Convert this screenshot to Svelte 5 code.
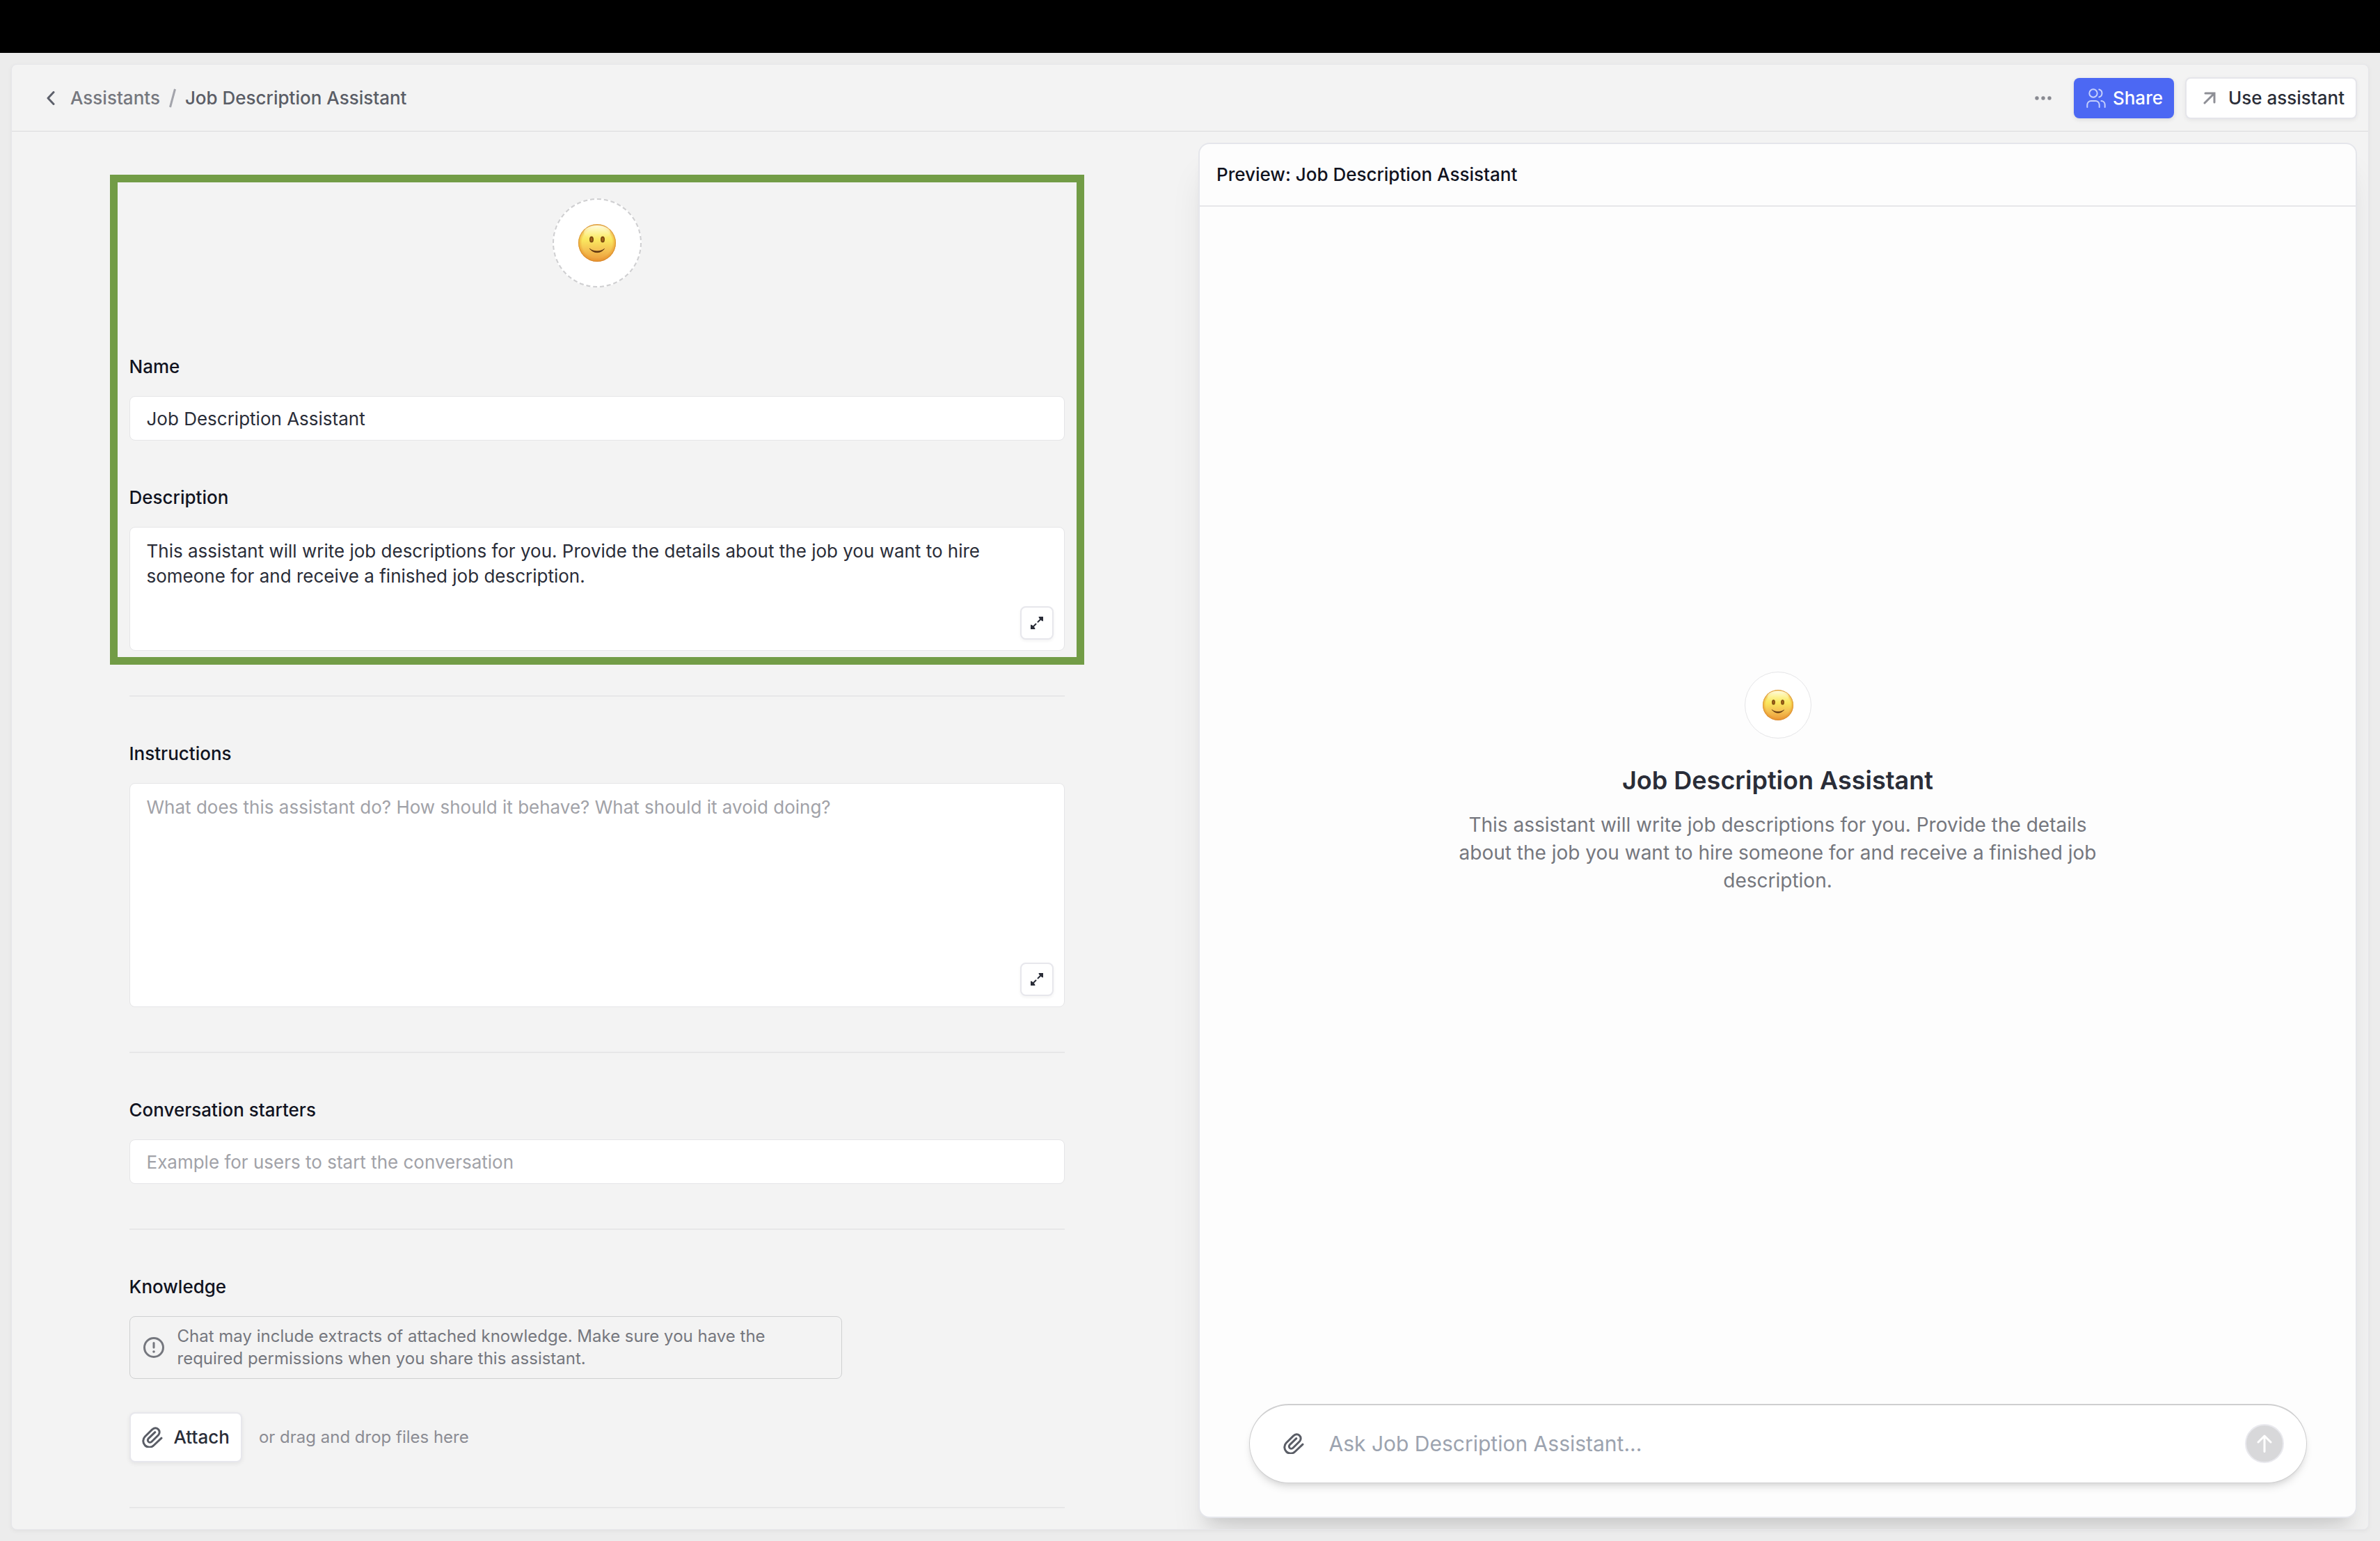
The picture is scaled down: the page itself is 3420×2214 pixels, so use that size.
<script>
  let name = $state('Job Description Assistant');
  let description = $state(
    'This assistant will write job descriptions for you. Provide the details about the job you want to hire someone for and receive a finished job description.'
  );
  let instructions = $state('');
  let starter = $state('');
  let message = $state('');
</script>

{#snippet smiley(id)}
  <svg class="smiley" viewBox="0 0 54 54" aria-hidden="true">
    <defs>
      <linearGradient id="{id}-base" x1="0" y1="0" x2="0" y2="1">
        <stop offset="0" stop-color="#fdf3a8" />
        <stop offset="0.2" stop-color="#fcf08a" />
        <stop offset="0.42" stop-color="#fae75f" />
        <stop offset="0.68" stop-color="#f5c453" />
        <stop offset="1" stop-color="#eb9838" />
      </linearGradient>
      <radialGradient id="{id}-rim" cx="0.5" cy="0.5" r="0.5">
        <stop offset="0.8" stop-color="#e08a20" stop-opacity="0" />
        <stop offset="0.93" stop-color="#e8932a" stop-opacity="0.45" />
        <stop offset="1" stop-color="#c9741c" stop-opacity="0.85" />
      </radialGradient>
      <linearGradient id="{id}-gloss" x1="0" y1="0" x2="0" y2="1">
        <stop offset="0" stop-color="#fffce0" />
        <stop offset="1" stop-color="#fff27a" stop-opacity="0" />
      </linearGradient>
    </defs>
    <circle cx="27" cy="27" r="27" fill="url(#{id}-base)" />
    <circle cx="27" cy="27" r="27" fill="url(#{id}-rim)" />
    <ellipse cx="27" cy="12" rx="19" ry="10" fill="url(#{id}-gloss)" />
    <ellipse cx="19" cy="22" rx="3" ry="4.5" fill="#7e4a10" />
    <ellipse cx="35" cy="22" rx="3" ry="4.5" fill="#7e4a10" />
    <ellipse cx="19" cy="22" rx="1.4" ry="2.6" fill="#a8691c" />
    <ellipse cx="35" cy="22" rx="1.4" ry="2.6" fill="#a8691c" />
    <path d="M16.5 35.5C22 42.5 32 42.5 37.5 35.5C32 40 22 40 16.5 35.5Z" fill="#5f3510" stroke="#5f3510" stroke-width="0.8" stroke-linejoin="round" />
  </svg>
{/snippet}

{#snippet paperclip()}
  <svg class="clip" viewBox="0 0 30 30" aria-hidden="true">
    <path d="M28 16.200 17 26.500A8.800 8.800 0 0 1 4.300 14L14.900 3.700A5.700 5.700 0 0 1 23.600 11.700L14 21.300A3.200 3.200 0 0 1 9.200 16.900L18.800 7.700" />
  </svg>
{/snippet}

{#snippet expand()}
  <svg class="expand-icon" viewBox="0 0 20 20" aria-hidden="true">
    <path d="M11.5 8.5 17 3M8.5 11.5 3 17" fill="none" stroke="currentColor" stroke-width="2" />
    <path d="M12.5 1H19v6.500L17 7 13 3ZM7.500 19H1v-6.500L3 13 7 17Z" fill="currentColor" />
  </svg>
{/snippet}

<div class="page">
  <div class="strip"></div>
  <div class="app">
    <header class="topbar">
      <nav class="crumbs" aria-label="Breadcrumb">
        <a class="back" href="#assistants" aria-label="Back">
          <svg viewBox="0 0 12 20" aria-hidden="true"><path d="M10 1.500 2 10l8 8.500" /></svg>
        </a>
        <a href="#assistants">Assistants</a>
        <svg class="slash" viewBox="0 0 10 28" aria-hidden="true"><path d="M8.500 1 1.500 27" /></svg>
        <span class="current">Job Description Assistant</span>
      </nav>
      <div class="actions">
        <button class="more" aria-label="More options">
          <svg viewBox="0 0 24 6" aria-hidden="true"><circle cx="3" cy="3" r="2.700" /><circle cx="12" cy="3" r="2.700" /><circle cx="21" cy="3" r="2.700" /></svg>
        </button>
        <button class="share">
          <svg viewBox="0 0 28 28" aria-hidden="true">
            <circle cx="10" cy="7" r="5.700" />
            <path d="M1.300 27v-3.500a5.500 5.500 0 0 1 5.500-5.500h6.400a5.500 5.500 0 0 1 5.500 5.500V27M18.300 1.500a5.700 5.700 0 0 1 0 11M21.500 18a5.500 5.500 0 0 1 5.200 5.500V27" />
          </svg>
          Share
        </button>
        <button class="use">
          <svg viewBox="0 0 18 18" aria-hidden="true"><path d="M3 2h13v13M16 2 2 16" /></svg>
          Use assistant
        </button>
      </div>
    </header>

    <main>
      <form class="editor">
        <section class="profile">
          <button type="button" class="avatar" aria-label="Choose icon">{@render smiley('edit')}</button>
          <div class="field">
            <label for="name">Name</label>
            <input id="name" bind:value={name} />
          </div>
          <div class="field">
            <label for="description">Description</label>
            <div class="area">
              <textarea id="description" class="short" bind:value={description}></textarea>
              <button type="button" class="expand" aria-label="Expand description">{@render expand()}</button>
            </div>
          </div>
          <div class="highlight"></div>
        </section>
        <hr />
        <div class="field">
          <label for="instructions">Instructions</label>
          <div class="area">
            <textarea id="instructions" class="tall" bind:value={instructions} placeholder="What does this assistant do? How should it behave? What should it avoid doing?"></textarea>
            <button type="button" class="expand" aria-label="Expand instructions">{@render expand()}</button>
          </div>
        </div>
        <hr />
        <div class="field">
          <label for="starter">Conversation starters</label>
          <input id="starter" bind:value={starter} placeholder="Example for users to start the conversation" />
        </div>
        <hr />
        <section class="knowledge">
          <div class="field">
            <h2>Knowledge</h2>
            <div class="notice">
              <svg viewBox="0 0 32 32" aria-hidden="true"><circle cx="16" cy="16" r="13.500" /><path d="M16 9.500V16" /><circle class="dot" cx="16" cy="22" r="1.800" /></svg>
              <p>Chat may include extracts of attached knowledge. Make sure you have the required permissions when you share this assistant.</p>
            </div>
          </div>
          <div class="attach-row">
            <button type="button" class="attach">{@render paperclip()}Attach</button>
            <span>or drag and drop files here</span>
          </div>
        </section>
        <hr />
      </form>

      <section class="preview">
        <h2>Preview: {name}</h2>
        <div class="intro">
          <div class="badge">{@render smiley('preview')}</div>
          <h1>{name}</h1>
          <p>{description}</p>
        </div>
        <div class="composer">
          <button class="add" aria-label="Attach file">{@render paperclip()}</button>
          <input aria-label="Message" bind:value={message} placeholder="Ask Job Description Assistant..." />
          <button class="send" aria-label="Send">
            <svg viewBox="0 0 24 26" aria-hidden="true"><path d="M12 24.500V2M3 11l9-9 9 9" /></svg>
          </button>
        </div>
      </section>
    </main>
  </div>
</div>

<style>
  :global(body) {
    background: #ececec;
  }

  .page,
  .page :global(*) {
    box-sizing: border-box;
  }

  .page {
    display: flex;
    flex-direction: column;
    height: 100vh;
    font-family: Inter, sans-serif;
    font-size: 26px;
    line-height: 36px;
    color: #2a2d38;
  }

  h1, h2, p, hr {
    margin: 0;
  }

  button, input, textarea {
    font: inherit;
    color: inherit;
    margin: 0;
  }

  button {
    display: flex;
    align-items: center;
    justify-content: center;
    padding: 0;
    border: 0;
    background: none;
  }

  svg {
    display: block;
    flex: none;
    fill: none;
    stroke: currentColor;
    stroke-linecap: round;
    stroke-linejoin: round;
  }

  .strip {
    flex: none;
    height: 76px;
    background: #000;
  }

  .app {
    flex: 1;
    min-height: 0;
    margin: 16px;
    display: flex;
    flex-direction: column;
    overflow: hidden;
    background: #f3f3f3;
    border: 1px solid #e6e6ea;
    border-radius: 8px;
    box-shadow: 0 2px 6px rgba(0, 0, 0, 0.05);
  }

  .topbar {
    flex: none;
    display: flex;
    align-items: center;
    justify-content: space-between;
    height: 96px;
    padding: 0 16px 0 50px;
    border-bottom: 1px solid #dadadc;
    font-weight: 500;
  }

  .crumbs {
    display: flex;
    align-items: center;
    gap: 13px;
  }

  .crumbs a {
    color: #75777e;
    text-decoration: none;
  }

  .crumbs .back {
    margin-right: 9px;
    color: #5d606b;
  }

  .back svg {
    width: 12px;
    height: 20px;
    stroke-width: 3;
  }

  .slash {
    width: 10px;
    height: 28px;
    color: #a3a4ab;
    stroke-width: 3;
    stroke-linecap: butt;
  }

  .current {
    color: #5a5d66;
  }

  .actions {
    display: flex;
    align-items: center;
    gap: 16px;
  }

  .more {
    margin-right: 16px;
    color: #898a91;
  }

  .more svg {
    width: 24px;
    height: 6px;
    fill: currentColor;
    stroke: none;
  }

  .share,
  .use {
    height: 60px;
    border-radius: 8px;
    font-weight: 500;
  }

  .share {
    height: 58px;
    padding: 0 16px 0 18px;
    gap: 10px;
    background: #4c68f3;
    color: #fff;
    box-shadow: 0 2px 6px rgba(0, 0, 0, 0.1);
  }

  .share svg {
    width: 28px;
    height: 28px;
    color: #c6d0fc;
    stroke-width: 2;
  }

  .use {
    padding: 0 16px 0 24px;
    gap: 18px;
    background: #fff;
    border: 2px solid #e5e5ea;
    box-shadow: 0 2px 6px rgba(0, 0, 0, 0.06);
  }

  .use svg {
    width: 18px;
    height: 18px;
    color: #8e8f96;
    stroke-width: 3;
    stroke-linejoin: miter;
  }

  main {
    flex: 1;
    min-height: 0;
    display: grid;
    grid-template-columns: minmax(0, 1fr) minmax(0, 1fr);
    gap: 40px;
    padding-right: 16px;
  }

  .editor {
    padding: 96px 0 28px 16px;
    width: 100%;
    display: flex;
    flex-direction: column;
    align-items: center;
    gap: 64px;
    min-height: 0;
  }

  .editor > * {
    width: 100%;
    max-width: 1344px;
  }

  .profile {
    position: relative;
    display: flex;
    flex-direction: column;
    gap: 64px;
  }

  .avatar {
    align-self: center;
    width: 128px;
    height: 128px;
    margin-bottom: 32px;
    border: 2px dashed #cfcfd1;
    border-radius: 50%;
    background: #fff;
  }

  .smiley {
    width: 54px;
    height: 54px;
    stroke: none;
  }

  .highlight {
    position: absolute;
    inset: -34px -28px -20px -28px;
    border: 11px solid #729c46;
    pointer-events: none;
  }

  .field {
    display: flex;
    flex-direction: column;
    gap: 24px;
  }

  label,
  .field h2,
  .preview h2 {
    font-size: 26px;
    line-height: 36px;
    font-weight: 500;
    color: #11131f;
  }

  .field input,
  textarea {
    display: block;
    width: 100%;
    border: 1px solid #e5e5e7;
    border-radius: 8px;
    background: #fff;
    outline: none;
  }

  .field input {
    height: 64px;
    padding: 0 24px;
  }

  textarea {
    padding: 16px 100px 16px 24px;
    resize: none;
    overflow: hidden;
  }

  .short {
    height: 178px;
  }

  .tall {
    height: 322px;
  }

  ::placeholder {
    color: #a1a2a8;
    opacity: 1;
  }

  .area {
    position: relative;
  }

  .expand {
    position: absolute;
    right: 16px;
    bottom: 16px;
    width: 48px;
    height: 48px;
    border: 2px solid #e7e7ec;
    border-radius: 8px;
    background: #fff;
    box-shadow: 0 2px 4px rgba(0, 0, 0, 0.05);
  }

  .expand-icon {
    width: 20px;
    height: 20px;
    stroke: none;
  }

  hr {
    height: 2px;
    flex: none;
    border: 0;
    background: #e7e7e8;
  }

  .knowledge {
    display: flex;
    flex-direction: column;
    gap: 48px;
  }

  .notice {
    display: flex;
    align-items: center;
    gap: 18px;
    width: 1024px;
    max-width: 100%;
    padding: 12px 100px 12px 18px;
    border: 1px solid #cfd0d1;
    border-radius: 8px;
    font-size: 24px;
    line-height: 32px;
    color: #75777e;
  }

  .notice svg {
    width: 32px;
    height: 32px;
    stroke-width: 3;
  }

  .notice .dot {
    fill: currentColor;
    stroke: none;
  }

  .attach-row {
    display: flex;
    align-items: center;
    gap: 24px;
    font-size: 24px;
    color: #8b8c93;
  }

  .attach {
    height: 72px;
    padding: 0 16px;
    gap: 16px;
    border: 2px solid #e7e7ec;
    border-radius: 8px;
    background: #fff;
    font-size: 26px;
    font-weight: 500;
    color: #2a2d38;
    box-shadow: 0 2px 6px rgba(0, 0, 0, 0.07);
  }

  .clip {
    width: 30px;
    height: 30px;
    color: #5a5d66;
    stroke-width: 3;
  }

  .preview {
    display: flex;
    flex-direction: column;
    min-width: 0;
    margin: 16px 0;
    background: #fdfdfd;
    border: 2px solid #e5e6eb;
    border-radius: 16px;
    box-shadow: 0 40px 50px -10px rgba(0, 0, 0, 0.1), 0 16px 20px -12px rgba(0, 0, 0, 0.1);
  }

  .preview h2 {
    flex: none;
    padding: 26px 24px;
    border-bottom: 2px solid #e7e7e9;
  }

  .intro {
    flex: 1;
    display: flex;
    flex-direction: column;
    align-items: center;
    justify-content: center;
    text-align: center;
  }

  .badge {
    display: flex;
    align-items: center;
    justify-content: center;
    width: 96px;
    height: 96px;
    border: 1px solid #e5e5e7;
    border-radius: 50%;
    background: #fff;
  }

  .badge .smiley {
    width: 44px;
    height: 44px;
  }

  h1 {
    margin: 36px 0 20px;
    font-size: 36px;
    line-height: 48px;
    font-weight: 600;
  }

  .intro p {
    max-width: 928px;
    font-size: 28px;
    line-height: 40px;
    color: #75777e;
  }

  .composer {
    flex: none;
    align-self: center;
    display: flex;
    align-items: center;
    width: calc(100% - 141px);
    height: 114px;
    margin: 64px 0 48px;
    padding: 0 32px 2px 48px;
    border: 1px solid #cfcfd0;
    border-top-width: 2px;
    border-radius: 57px;
    background: #fff;
    box-shadow: 0 8px 12px -2px rgba(0, 0, 0, 0.1), 0 4px 8px -4px rgba(0, 0, 0, 0.1);
  }

  .composer input {
    flex: 1;
    min-width: 0;
    padding: 0 36px;
    border: 0;
    outline: none;
    background: none;
    font-size: 30px;
    line-height: 40px;
  }

  .composer ::placeholder {
    color: #9ca3af;
  }

  .send {
    width: 56px;
    height: 56px;
    border: 2px solid #e9e9ee;
    border-radius: 50%;
    background: #d8d8da;
    color: #fff;
  }

  .send svg {
    width: 24px;
    height: 26px;
    stroke-width: 3;
  }
</style>
